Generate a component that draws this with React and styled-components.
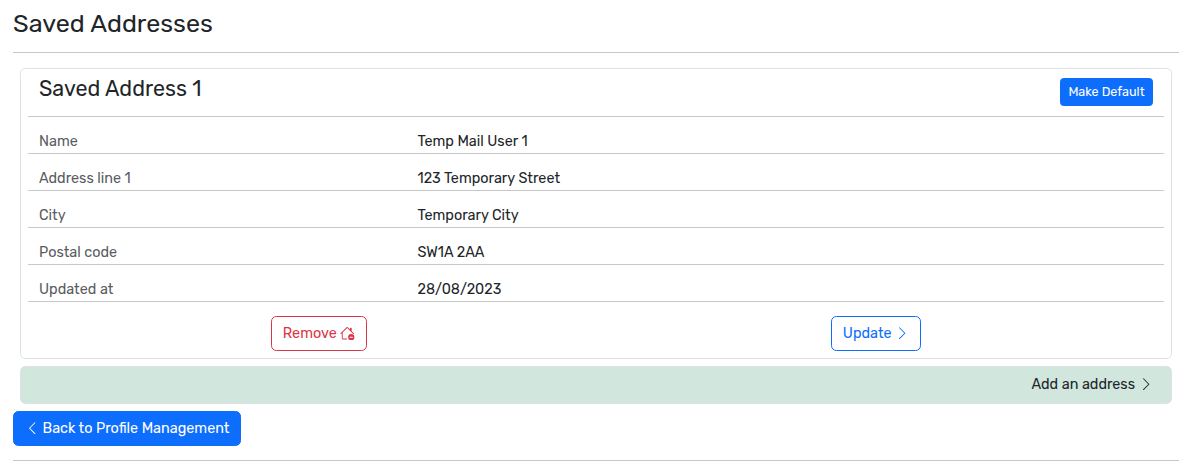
import React from "react";
import styled, { createGlobalStyle } from "styled-components";
import { BsChevronLeft, BsChevronRight, BsHouseDash } from "react-icons/bs";

const GlobalStyle = createGlobalStyle`
  *, *::before, *::after { box-sizing: border-box; }
  body {
    margin: 0;
    background: #fff;
    color: #212529;
    font-family: Rubik, Roboto, sans-serif;
    font-size: 14.4px;
    line-height: 20px;
  }
  svg {
    flex: none;
  }
`;

const Page = styled.main`
  width: 1166px;
  margin-left: 13px;
  padding-top: 7px;
`;

const PageTitle = styled.h1`
  margin: 0;
  height: 45px;
  font-size: 25.15px;
  font-weight: 400;
  line-height: 32px;
  white-space: nowrap;
`;

const Rule = styled.hr`
  height: 1px;
  margin: 0;
  border: 0;
  background: #c7c8c9;
`;

const Card = styled.section`
  height: 291px;
  margin: 15px 7px 7px;
  padding: 0 7px;
  border: 1px solid #dee2e6;
  border-radius: 5.4px;
`;

const CardHeader = styled.header`
  display: flex;
  justify-content: space-between;
  align-items: flex-start;
  height: 47px;
  padding: 9px 11px 0;
`;

const CardTitle = styled.h2`
  margin: -3px 0 0;
  font-size: 21.5px;
  font-weight: 400;
  line-height: 28px;
`;

const Details = styled.dl`
  margin: 0;
  border-top: 1px solid #c7c8c9;
`;

const DetailRow = styled.div`
  display: grid;
  grid-template-columns: 378.5px 1fr;
  height: 37px;
  padding: 15px 11px 0;
  border-bottom: 1px solid #c7c8c9;
`;

const Label = styled.dt`
  color: #5a5c5f;
`;

const Value = styled.dd`
  margin: 0;
`;

const Actions = styled.div`
  display: grid;
  grid-template-columns: 1fr 1fr;
  justify-items: center;
  padding: 14px 9px 0 12px;
`;

const ButtonText = styled.span`
  padding-top: 2px;
`;

const Button = styled.button`
  display: inline-flex;
  align-items: center;
  justify-content: center;
  gap: 3.6px;
  width: ${({ $width }) => $width}px;
  height: 35px;
  padding: 0 0 1px;
  border: 1px solid ${({ $color }) => $color};
  border-radius: 5.4px;
  background: ${({ $filled, $color }) => ($filled ? $color : "transparent")};
  color: ${({ $filled, $color }) => ($filled ? "#fff" : $color)};
  font: inherit;
  white-space: nowrap;
`;

const SmallButton = styled(Button)`
  height: 28px;
  padding: 0;
  border-radius: 3.6px;
  font-size: 12.6px;
`;

const AddAddress = styled.a`
  display: flex;
  justify-content: flex-end;
  align-items: center;
  gap: 3.6px;
  height: 38px;
  margin: 0 7px 7px;
  padding: 0 18px 2px 0;
  border: 1px solid #dee2e6;
  border-radius: 5.4px;
  background: #d1e7dd;
`;

const Footer = styled.footer`
  height: 49px;
`;

const details = [
  { label: "Name", value: "Temp Mail User 1" },
  { label: "Address line 1", value: "123 Temporary Street" },
  { label: "City", value: "Temporary City" },
  { label: "Postal code", value: "SW1A 2AA" },
  { label: "Updated at", value: "28/08/2023" },
];

export default function App() {
  return (
    <>
      <GlobalStyle />
      <Page>
        <PageTitle>Saved Addresses</PageTitle>
        <Rule />
        <Card>
          <CardHeader>
            <CardTitle>Saved Address 1</CardTitle>
            <SmallButton $filled $color="#0d6efd" $width={93}>
              Make Default
            </SmallButton>
          </CardHeader>
          <Details>
            {details.map(({ label, value }) => (
              <DetailRow key={label}>
                <Label>{label}</Label>
                <Value>{value}</Value>
              </DetailRow>
            ))}
          </Details>
          <Actions>
            <Button $color="#dc3545" $width={96}>
              <ButtonText>Remove</ButtonText>
              <BsHouseDash size={14.4} />
            </Button>
            <Button $color="#0d6efd" $width={90}>
              <ButtonText>Update</ButtonText>
              <BsChevronRight size={14.4} />
            </Button>
          </Actions>
        </Card>
        <AddAddress>
          <ButtonText>Add an address</ButtonText>
          <BsChevronRight size={14.4} />
        </AddAddress>
        <Footer>
          <Button $filled $color="#0d6efd" $width={228}>
            <BsChevronLeft size={14.4} />
            <ButtonText>Back to Profile Management</ButtonText>
          </Button>
        </Footer>
        <Rule />
      </Page>
    </>
  );
}
